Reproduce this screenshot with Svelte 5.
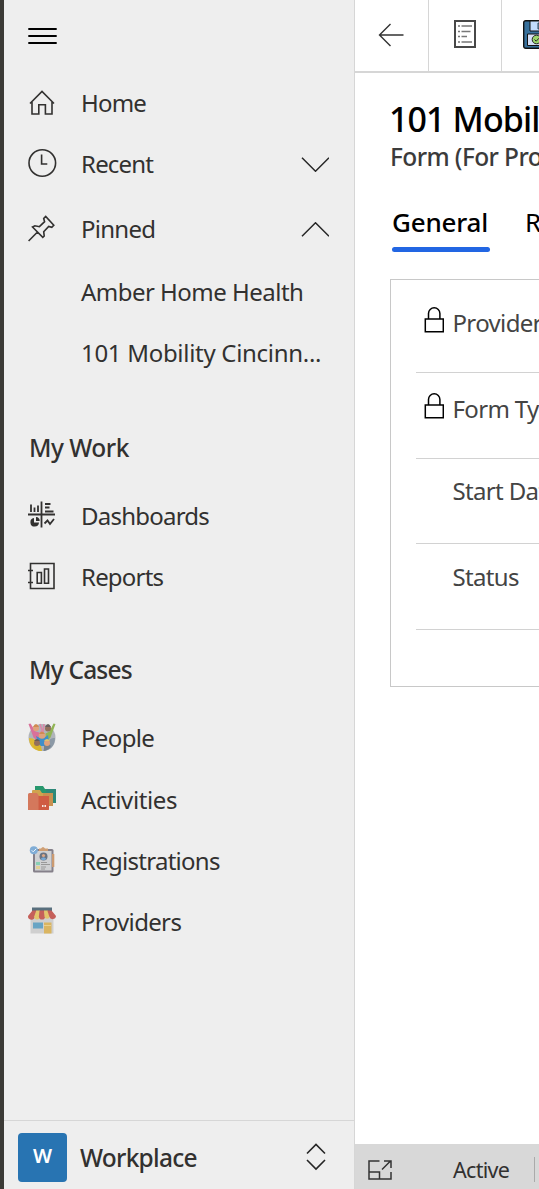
<script>
  const nav = [
    { label: 'Home', icon: 'home', height: 62, spacing: -0.8 },
    { label: 'Recent', icon: 'recent', height: 60, spacing: -0.8, chevron: 'down' },
    { label: 'Pinned', icon: 'pin', height: 70, spacing: -0.75, chevron: 'up' },
    { label: 'Amber Home Health', height: 56, spacing: -0.52 },
    { label: '101 Mobility Cincinn...', height: 66, spacing: -0.3 },
    { label: 'My Work', group: true, height: 60, spacing: -0.5 },
    { label: 'Dashboards', icon: 'dashboard', height: 60, spacing: -0.77 },
    { label: 'Reports', icon: 'report', height: 62, spacing: -0.8 },
    { label: 'My Cases', group: true, height: 60, spacing: -0.8 },
    { label: 'People', icon: 'people', height: 60, spacing: -0.65 },
    { label: 'Activities', icon: 'folders', height: 64, spacing: -0.4 },
    { label: 'Registrations', icon: 'clipboard', height: 58, spacing: -0.73 },
    { label: 'Providers', icon: 'store', height: 64, spacing: -0.65 }
  ];
  const fields = [
    { label: 'Provider', locked: true, height: 93 },
    { label: 'Form Type', locked: true, height: 86 },
    { label: 'Start Date', height: 85 },
    { label: 'Status', height: 86 }
  ];
</script>

{#snippet icon(name)}
  <svg class="icon {name}" width="28" height="28" viewBox="0 0 28 28" fill="none" stroke="#323130" stroke-width="1.6">
    {#if name === 'home'}
      <path d="M2 14.500 14 2.500l12 12M4 12.500V25h6.800v-9.300h6.600V25H24V12.500" />
    {:else if name === 'recent'}
      <circle cx="14.300" cy="13" r="13.300" /><path d="M13.600 4.500V14h5.700" />
    {:else if name === 'pin'}
      <path d="M.6 26 9.500 17M4.500 12l10.300 10.300 1.400-1.300-.5-4.300 5-5.300 3.100.9 2-2L17.700 1.500l-2 2 .9 3.200-5.200 5-4.500-.9z" />
    {:else if name === 'dashboard'}
      <path d="M0 13.500h27M13.500.5v26M3 3.500V11M6.500 6.500V11M10 4.500V11M17 3h5.500M17 6.500h4.500M17 10.500h8.500" stroke-width="1.800" />
      <path d="m16.500 22.500 3-3 2.500 3.500 4-5" stroke-width="1.800" />
      <path d="M6 17v4.500h5A4.300 4.300 0 1 1 6 17z" fill="#323130" stroke="none" /><path d="M8 16a4 4 0 0 1 3.700 4H8z" fill="#323130" stroke="none" />
    {:else if name === 'report'}
      <path d="M2.500 8V1.500H26v25H2.500V20M2.500 8v12M0 8.500h5M0 20.500h5M9.200 10.500h4.200v10.700H9.200zM16.500 7h4v14.200h-4z" />
    {:else if name === 'people'}
      <g stroke="none">
        <circle cx="14" cy="14.500" r="13.500" fill="#b0b4ba" />
        <path d="M1 15c5 0 9 3 9 8l4 5C5 28 1 22 1 15z" fill="#dfba35" /><path d="M27 15c-5 0-8 2-12 13 7 0 12-5 12-13z" fill="#8c99a6" />
        <path d="m.500 1 2-.5 5 8 4 1v10l-6-5z" fill="#d9719a" /><path d="m27.500 1-2-.5-4 8-4 2v9l5-5z" fill="#91b455" />
        <path d="m12 1 2 6-2 4M16 1l-1 9" stroke="#d889a8" stroke-width="1.600" />
        <path d="M8 13q3 2 6 2t6-3l1 8-4 3h-6z" fill="#3f8fc9" />
        <path d="M5 23q4-4 8 0l1 5q-6 0-9-5z" fill="#d9b52e" /><path d="M16 23q4-4 7 0-2 4-7 5z" fill="#76828e" />
        <g fill="#dfa27c"><circle cx="8" cy="5.300" r="3" /><circle cx="14" cy="12.500" r="3.300" /><circle cx="19" cy="20" r="3" /></g>
        <g fill="#94705c"><circle cx="20" cy="5.500" r="3" /><circle cx="9" cy="20" r="3" /></g>
        <path d="M5 4q3-6 6 0zM11 11q3-5 6 0z" fill="#d08a52" /><path d="M17 4q3-6 6 0zM6 18q3-4 6 0z" fill="#655d5b" /><path d="M16 18q3-4 6 0z" fill="#dfc36c" />
      </g>
    {:else if name === 'folders'}
      <g stroke="none">
        <path d="M7 1h8l2 3h11v14H7z" fill="#27976d" /><path d="M18 4h10v14H18z" fill="#2d8878" />
        <path d="M4 6q0-1 1-1h7l2 3h11v13H4z" fill="#d0a34e" /><path d="M15 8h10v13H15z" fill="#c99050" />
        <path d="M0 9.500Q0 8 1.500 8H9l2 3h10v13Q21 25 20 25H0z" fill="#d4785c" /><path d="M10.500 11H21v13q0 1-1 1h-9.500z" fill="#cf5c43" />
        <path d="M14 20h1.500v2H14zM16.500 20H18v2h-1.500z" fill="#f5e7e2" />
      </g>
    {:else if name === 'clipboard'}
      <g stroke="none">
        <rect x="5" y="3" width="20.500" height="23.500" rx="1.500" fill="#85808a" /><rect x="7" y="5" width="16.500" height="19.500" fill="#d0d1d3" />
        <path d="M11 5V2.500h2q2-3 4 0h3V5z" fill="#cf9f74" />
        <rect x="24" y="8" width="2.300" height="13" fill="#cb9a70" />
        <circle cx="15.500" cy="10.500" r="4" fill="#6a7482" /><circle cx="15.500" cy="9.500" r="1.600" fill="#dba98a" /><path d="M12.600 13q3-3.500 5.800 0-3 2.500-5.800 0z" fill="#77a8d4" />
        <path d="M8 16h4v3H8z" fill="#88d0b4" /><path d="M8 20h4v3H8z" fill="#e0d095" />
        <path d="M13 16.500h6M13 18.500h9M13 21h5M13 23h4" stroke="#999" stroke-width="1" />
        <circle cx="5.800" cy="4.300" r="4" fill="#80add6" /><path d="m3.700 4.300 1.500 1.500 3-3" stroke="#eef5fb" stroke-width="1" />
      </g>
    {:else if name === 'store'}
      <g stroke="none">
        <rect x="2.500" y="9" width="23" height="17.500" fill="#cfcfcf" /><rect x="4" y=".5" width="20" height="4" fill="#596f7d" />
        <path d="M4.500 3.500H9L6.800 9.500a3.400 3.400 0 0 1-6.800-.5z" fill="#c5605a" /><path d="M8.300 3.500H12v6a2.900 2.900 0 0 1-5.800 0z" fill="#e3c56c" />
        <path d="M11.500 3.500h5l.6 6a3.100 3.100 0 0 1-6.200 0z" fill="#c5605a" /><path d="M16 3.500h3.800l2 6a2.700 2.700 0 0 1-5.300 0z" fill="#e3c56c" /><path d="M19.300 3.500h4.200L28 9a3.400 3.400 0 0 1-6.700.5z" fill="#c5605a" />
        <rect x="5" y="15.500" width="10" height="6" fill="#68a4c4" /><rect x="16" y="15.500" width="7.500" height="11" fill="#dab561" /><path d="M16 18.500h7" stroke="#ead18d" stroke-width="1" />
      </g>
    {/if}
  </svg>
{/snippet}

<div class="app">
  <aside>
    <div class="menu">
      <svg width="29" height="16" viewBox="0 0 29 16" stroke="#000" stroke-width="2"><path d="M.3 1h28.400M.3 8h28.400M.3 15h28.400" /></svg>
    </div>
    <nav>
      {#each nav as item}
        <div class="item" class:group={item.group} style:height="{item.height}px">
          {#if !item.group}
            <span class="slot">{#if item.icon}{@render icon(item.icon)}{/if}</span>
          {/if}
          <span class="label" style:letter-spacing="{item.spacing}px">{item.label}</span>
          {#if item.chevron}
            <svg width="28" height="15" viewBox="0 0 28 15" fill="none" stroke="#262626" stroke-width="1.500">
              <path d={item.chevron === 'down' ? 'M1 .700 14.500 14.200 28 .7' : 'M1 14.300 14.500 .8l13.500 13.500'} />
            </svg>
          {/if}
        </div>
      {/each}
    </nav>
    <div class="area">
      <span class="tile">W</span>
      <span class="name">Workplace</span>
      <svg width="20" height="28" viewBox="0 0 20 28" fill="none" stroke="#262626" stroke-width="1.600"><path d="m1 10.500 9-9 9 9M1 17l9 9 9-9" /></svg>
    </div>
  </aside>

  <main>
    <header>
      <div class="tool back">
        <svg width="26" height="24" viewBox="0 0 26 24" fill="none" stroke="#333" stroke-width="1.400"><path d="M12.500 1 1.500 12l11 11M1.500 12H25.500" /></svg>
      </div>
      <div class="tool">
        <svg width="22" height="28" viewBox="0 0 22 28" fill="none"><path d="M1 1h20v26H1z" stroke="#484848" stroke-width="2" /><path d="M4 6h2M4 11.500h2M4 16.500h2M4 22h2M7.500 6H18M7.500 11.500h9M7.500 16.500h5.500M7.500 22H18" stroke="#777" stroke-width="1.700" /></svg>
      </div>
      <div class="tool save">
        <svg width="30" height="29" viewBox="0 0 30 29">
          <rect x=".7" y=".7" width="28.600" height="27.600" rx="2" fill="#37709c" stroke="#111" stroke-width="1.400" />
          <path d="M7 1h16v10H7z" fill="#c3dcff" stroke="#111" /><path d="M15 3h4v6h-4z" fill="#7094b8" stroke="#345" />
          <path d="M4.500 14h21v11.500h-21z" fill="#d5def5" stroke="#111" />
          <circle cx="13.500" cy="19.500" r="4.300" fill="#9cd66c" stroke="#222" /><path d="m11.500 19.500 1.700 1.700 2.800-3" fill="none" stroke="#222" />
        </svg>
      </div>
    </header>
    <h1>101 Mobility</h1>
    <h2>Form (For Provider)</h2>
    <div class="tabs"><span class="tab active">General</span><span class="tab">Related</span></div>
    <section>
      {#each fields as field}
        <div class="field" class:locked={field.locked} style:height="{field.height}px">
          <span class="lock">
            {#if field.locked}
              <svg width="20" height="26" viewBox="0 0 20 26" fill="none" stroke="#000" stroke-width="1.500"><path d="M1.300 12h18v12.700h-18zM4.500 12V6.500a5.700 5.700 0 0 1 11.400 0V12" /></svg>
            {/if}
          </span>
          <span class="text">{field.label}</span>
        </div>
      {/each}
    </section>
    <footer>
      <svg width="24" height="20" viewBox="0 0 24 20" fill="none" stroke="#333" stroke-width="1.500"><path d="M11.500 1H1v18h22v-7M1 12h10.500v7M14 9.500 22.500 1M16 1h7v7" /></svg>
      <span>Active</span>
      <i></i>
    </footer>
  </main>
</div>

<style>
  :global(body) { margin: 0; overflow: hidden; }
  .app { display: flex; box-sizing: border-box; width: 539px; height: 1189px; overflow: hidden; border-left: 4px solid #3b3a36; font-family: 'Noto Sans', sans-serif; font-size: 24px; color: #323130; background: #fff; white-space: nowrap; }
  aside { display: flex; flex: 0 0 350px; flex-direction: column; background: #eee; border-right: 1px solid #d6d6d6; }
  .menu { display: flex; align-items: center; box-sizing: border-box; height: 72px; padding-left: 24px; }
  nav { flex: 1; }
  .item { display: flex; align-items: center; padding: 0 25px 0 24px; }
  .group { margin: 32px 0 8px; font-weight: 550; font-size: 24.500px; padding-left: 25px; }
  .slot { display: flex; width: 53px; }
  .label { flex: 1; line-height: 34px; }
  .icon { display: block; overflow: visible; }
  .dashboard, .report, .people, .folders, .clipboard, .store { margin-top: -3px; }
  .area { display: flex; align-items: center; box-sizing: border-box; height: 69px; padding: 4px 28px 0 14px; border-top: 1px solid #d6d6d6; }
  .tile { width: 49px; height: 49px; border-radius: 4px; background: #2874b2; color: #fff; font-size: 20px; font-weight: 650; line-height: 46px; text-align: center; }
  .name { flex: 1; margin-left: 13px; font-size: 24.500px; font-weight: 550; letter-spacing: -.75px; }
  main { display: flex; flex: 1; min-width: 0; flex-direction: column; overflow: hidden; }
  header { display: flex; box-sizing: border-box; height: 73px; border-bottom: 2px solid #d6d6d6; margin-bottom: 26px; flex: none; }
  .tool { display: flex; flex: 0 0 73px; align-items: center; justify-content: center; box-sizing: border-box; padding-bottom: 3px; border-right: 1px solid #d6d6d6; }
  .tool.back { flex-basis: 74px; padding: 0 1px 1px 0; }
  .tool.save { padding-left: 21px; justify-content: flex-start; flex-basis: 90px; }
  h1 { margin: 0 0 0 34px; color: #000; font-size: 34px; font-weight: 550; line-height: 40px; letter-spacing: -.9px; }
  h2 { margin: 1px 0 0 35px; color: #3b3b3b; font-size: 24.500px; font-weight: 550; line-height: 34px; letter-spacing: -.6px; }
  .tabs { display: flex; gap: 35px; margin: 30px 0 27px 37px; font-size: 26px; line-height: 36px; color: #000; }
  .tab { flex: none; height: 48px; box-sizing: border-box; letter-spacing: -.7px; }
  .active { width: 98px; font-weight: 550; letter-spacing: -.2px; }
  .active::after { content: ''; display: block; height: 5px; margin-top: 7px; border-radius: 3px; background: #2266e3; }
  section { flex: none; box-sizing: border-box; height: 408px; margin-left: 35px; width: 500px; padding-left: 25px; border: 1px solid #c8c8c8; }
  .field { display: flex; box-sizing: border-box; border-bottom: 1px solid #d2d2d2; color: #444; line-height: 34px; padding: 15px 0 0 8px; }
  .field:first-child { padding-top: 25px; }
  .field:nth-child(2) { padding-top: 18px; }
  .field:last-child { padding-top: 16px; }
  .lock { width: 28.500px; padding-top: 2px; }
  .text { letter-spacing: -.65px; }
  .locked .text { padding-top: 1px; }
  footer { display: flex; align-items: center; box-sizing: border-box; height: 45px; margin-top: auto; padding: 6px 0 0 13px; background: #d8d8d8; font-size: 21.500px; }
  footer span { width: 56px; margin-left: 61px; letter-spacing: -.7px; }
  footer i { width: 1px; height: 25px; margin-left: 25px; background: #aaa; }
</style>
